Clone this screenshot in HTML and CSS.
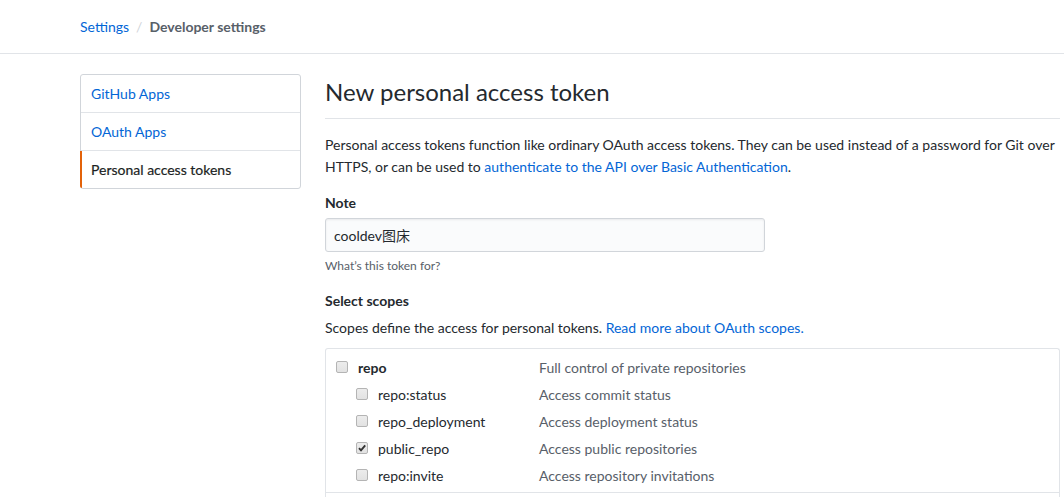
FILE: index.html
```html
<!DOCTYPE html>
<html lang="en">
<head>
<meta charset="utf-8">
<title>New personal access token</title>
<link rel="stylesheet" href="styles.css">
</head>
<body>
<header class="subhead">
  <nav class="container crumbs">
    <a class="crumb-link" href="#">Settings</a>
    <span class="crumb-sep">/</span>
    <strong class="crumb-current">Developer settings</strong>
  </nav>
</header>
<div class="container layout">
  <aside class="sidebar">
    <nav class="menu">
      <a class="menu-item" href="#">GitHub Apps</a>
      <a class="menu-item" href="#">OAuth Apps</a>
      <a class="menu-item selected" href="#">Personal access tokens</a>
    </nav>
  </aside>
  <main class="main">
    <h2 class="page-title">New personal access token</h2>
    <p class="intro">Personal access tokens function like ordinary OAuth access tokens. They can be used instead of a password for Git over HTTPS, or can be used to <a href="#">authenticate to the API over Basic Authentication</a>.</p>
    <div class="form-group">
      <label class="label" for="note">Note</label>
      <input class="input" id="note" type="text" value="cooldev图床">
      <p class="hint">What’s this token for?</p>
    </div>
    <div class="form-group">
      <div class="label scopes-label">Select scopes</div>
      <p class="scope-desc">Scopes define the access for personal tokens. <a href="#">Read more about OAuth scopes.</a></p>
      <div class="scopes">
        <div class="scope-group">
          <label class="scope-row parent">
            <span class="scope-name"><input type="checkbox" class="cb"><b>repo</b></span>
            <span class="scope-info">Full control of private repositories</span>
          </label>
          <label class="scope-row child">
            <span class="scope-name"><input type="checkbox" class="cb">repo:status</span>
            <span class="scope-info">Access commit status</span>
          </label>
          <label class="scope-row child">
            <span class="scope-name"><input type="checkbox" class="cb">repo_deployment</span>
            <span class="scope-info">Access deployment status</span>
          </label>
          <label class="scope-row child">
            <span class="scope-name"><input type="checkbox" class="cb" checked>public_repo</span>
            <span class="scope-info">Access public repositories</span>
          </label>
          <label class="scope-row child">
            <span class="scope-name"><input type="checkbox" class="cb">repo:invite</span>
            <span class="scope-info">Access repository invitations</span>
          </label>
        </div>
        <div class="scope-group next"></div>
      </div>
    </div>
  </main>
</div>
</body>
</html>
```

FILE: styles.css
```css
* { box-sizing: border-box; }
html, body { margin: 0; background: #fff; }
body {
  font-family: Lato, "Noto Sans CJK SC", sans-serif;
  font-size: 14px;
  line-height: 1.5;
  color: #24292e;
}
a { color: #0366d6; text-decoration: none; }

.container { width: 980px; margin-left: 80px; }

.subhead { border-bottom: 1px solid #e1e4e8; }
.crumbs {
  height: 53px;
  display: flex;
  align-items: center;
  gap: 7px;
  font-size: 14px;
}
.crumb-sep { color: #d1d5da; }
.crumb-current { color: #586069; font-weight: 700; }

.layout {
  display: flex;
  gap: 24px;
  padding-top: 20px;
}
.sidebar { width: 221px; flex: none; }
.menu {
  display: flex;
  flex-direction: column;
  border: 1px solid #d1d5da;
  border-radius: 3px;
  background: #fff;
}
.menu-item {
  display: block;
  padding: 8px 10px;
  border-bottom: 1px solid #e1e4e8;
  line-height: 21px;
}
.menu-item:last-child { border-bottom: 0; }
.menu-item.selected {
  color: #1b1f23;
  border-left: 2px solid #e36209;
  padding-left: 9px;
  margin-left: -1px;
  border-radius: 0 0 0 2px;
  -webkit-text-stroke: 0.2px #1b1f23;
}

.main { flex: 1; min-width: 0; }
.page-title {
  margin: 0 0 16px;
  padding-bottom: 8px;
  font-size: 24px;
  font-weight: 400;
  line-height: 36px;
  border-bottom: 1px solid #e1e4e8;
}
.intro { margin: -1px 0 14px; line-height: 22px; }

.form-group { margin-bottom: 15px; }
.label {
  display: block;
  font-weight: 700;
  line-height: 21px;
  margin-bottom: 5px;
}
.scopes-label { margin-bottom: 6px; }
.input {
  display: block;
  width: 440px;
  height: 34px;
  padding: 6px 8px;
  font: inherit;
  font-size: 14px;
  line-height: 20px;
  color: #24292e;
  background: #fafbfc;
  border: 1px solid #d1d5da;
  border-radius: 3px;
  box-shadow: inset 0 1px 2px rgba(27,31,35,0.075);
}
.hint {
  margin: 5px 0 0;
  font-size: 12px;
  line-height: 18px;
  color: #586069;
}
.scope-desc { margin: 0 0 10px; line-height: 21px; }

.scopes {
  border: 1px solid #e1e4e8;
  border-bottom: 0;
  border-radius: 3px 3px 0 0;
}
.scope-group {
  padding: 8px 10px 6px;
  display: flex;
  flex-direction: column;
  gap: 6px;
  border-bottom: 1px solid #e1e4e8;
}
.scope-group.next { height: 12px; border-bottom: 0; }
.scope-row {
  display: grid;
  grid-template-columns: 203px 1fr;
  line-height: 21px;
}
.scope-row.child .scope-name { padding-left: 20px; }
.scope-name { display: flex; align-items: center; }
.scope-info { color: #586069; }
.cb {
  -webkit-appearance: none;
  appearance: none;
  margin: 0 10px 0 0;
  width: 12px;
  height: 12px;
  flex: none;
  border: 1px solid #b4b4b4;
  border-radius: 2px;
  background: linear-gradient(#ececec, #e2e2e2);
  position: relative;
  top: -1px;
}
.cb:checked {
  background:
    url("data:image/svg+xml;utf8,<svg xmlns='http://www.w3.org/2000/svg' viewBox='0 0 10 10'><path d='M2 5.2 L4 7.4 L8.2 2.4' fill='none' stroke='%23333' stroke-width='1.9'/></svg>") center / 10px 10px no-repeat,
    linear-gradient(#ececec, #e2e2e2);
}
```
